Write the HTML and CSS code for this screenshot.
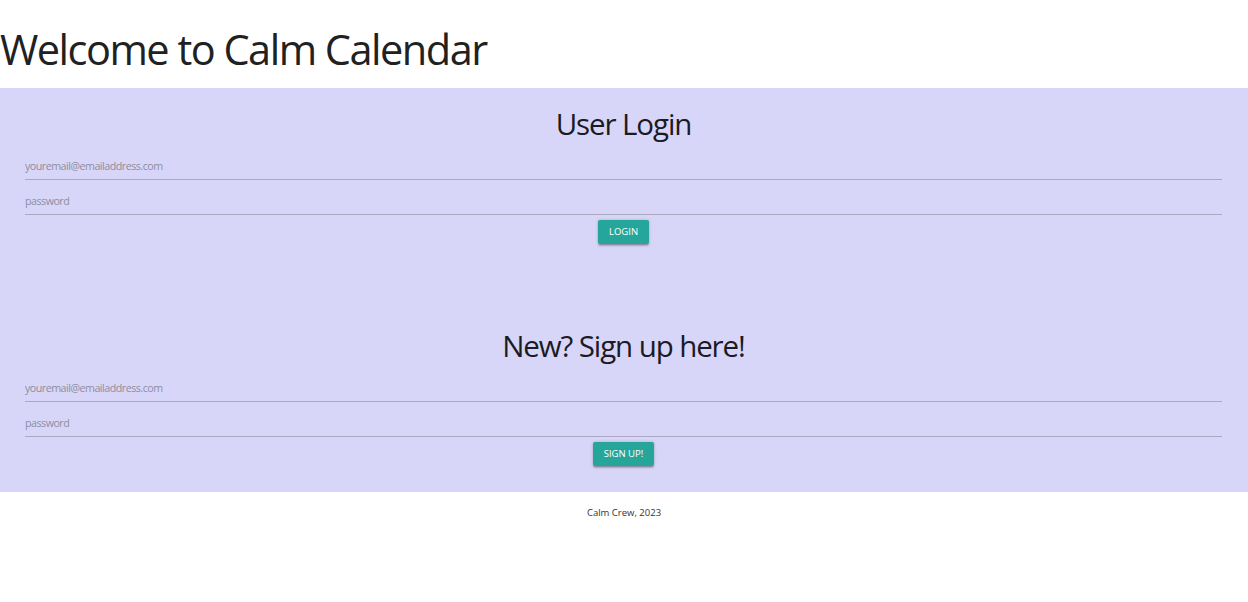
FILE: index.html
```html
<!DOCTYPE html>
<html lang="en">
<head>
<meta charset="utf-8">
<title>Calm Calendar</title>
<link rel="stylesheet" href="styles.css">
</head>
<body>
<header class="site-header">
  <h1 class="site-title">Welcome to Calm Calendar</h1>
</header>
<main class="auth">
  <section class="auth-block">
    <h2 class="auth-heading">User Login</h2>
    <form class="auth-form">
      <input class="auth-input" type="email" placeholder="youremail@emailaddress.com">
      <input class="auth-input" type="password" placeholder="password">
      <button class="btn" type="button">Login</button>
    </form>
  </section>
  <section class="auth-block auth-block--signup">
    <h2 class="auth-heading">New? Sign up here!</h2>
    <form class="auth-form">
      <input class="auth-input" type="email" placeholder="youremail@emailaddress.com">
      <input class="auth-input" type="password" placeholder="password">
      <button class="btn" type="button">Sign Up!</button>
    </form>
  </section>
</main>
<footer class="site-footer">Calm Crew, 2023</footer>
</body>
</html>
```
FILE: styles.css
```css
* { box-sizing: border-box; }

html, body {
  margin: 0;
  padding: 0;
  background: #ffffff;
  font-family: "Open Sans", "Noto Sans", sans-serif;
  color: rgba(0, 0, 0, 0.87);
}

.site-header {
  padding: 26px 0 16px 0;
}

.site-title {
  margin: 0;
  font-size: 41.5px;
  font-weight: 400;
  line-height: 46px;
  color: #212121;
  letter-spacing: -1.5px;
}

.auth {
  background: #d8d6f8;
  padding: 19px 26px 26px 25px;
  display: flex;
  flex-direction: column;
}

.auth-block--signup {
  margin-top: 85px;
}

.auth-heading {
  margin: 0;
  text-align: center;
  font-size: 29.5px;
  font-weight: 400;
  line-height: 33px;
  color: #1b1a25;
  letter-spacing: -1.1px;
}

.auth-form {
  display: flex;
  flex-direction: column;
  align-items: center;
  padding-top: 12px;
}

.auth-input {
  display: block;
  width: 100%;
  height: 28px;
  margin: 0 0 7px 0;
  padding: 0;
  border: none;
  border-bottom: 1px solid #aaa9bf;
  background: transparent;
  outline: none;
  font-family: inherit;
  font-size: 10.7px;
  line-height: 16px;
  color: #333;
  letter-spacing: -0.5px;
}

.auth-input::placeholder {
  color: #8e8d9f;
  opacity: 1;
}

.btn {
  margin-top: -2px;
  height: 24px;
  padding: 0 10.5px;
  border: none;
  border-radius: 2px;
  background: #26a69a;
  color: #ffffff;
  font-family: inherit;
  font-size: 9.5px;
  font-weight: 500;
  text-transform: uppercase;
  letter-spacing: 0;
  line-height: 24px;
  cursor: pointer;
  box-shadow: 0 1.3px 1.3px 0 rgba(0,0,0,0.14), 0 2px 0.7px -1.3px rgba(0,0,0,0.12), 0 0.7px 3.3px 0 rgba(0,0,0,0.2);
}

.site-footer {
  padding-top: 14px;
  text-align: center;
  font-size: 9.5px;
  line-height: 14px;
  color: #333;
}
```
